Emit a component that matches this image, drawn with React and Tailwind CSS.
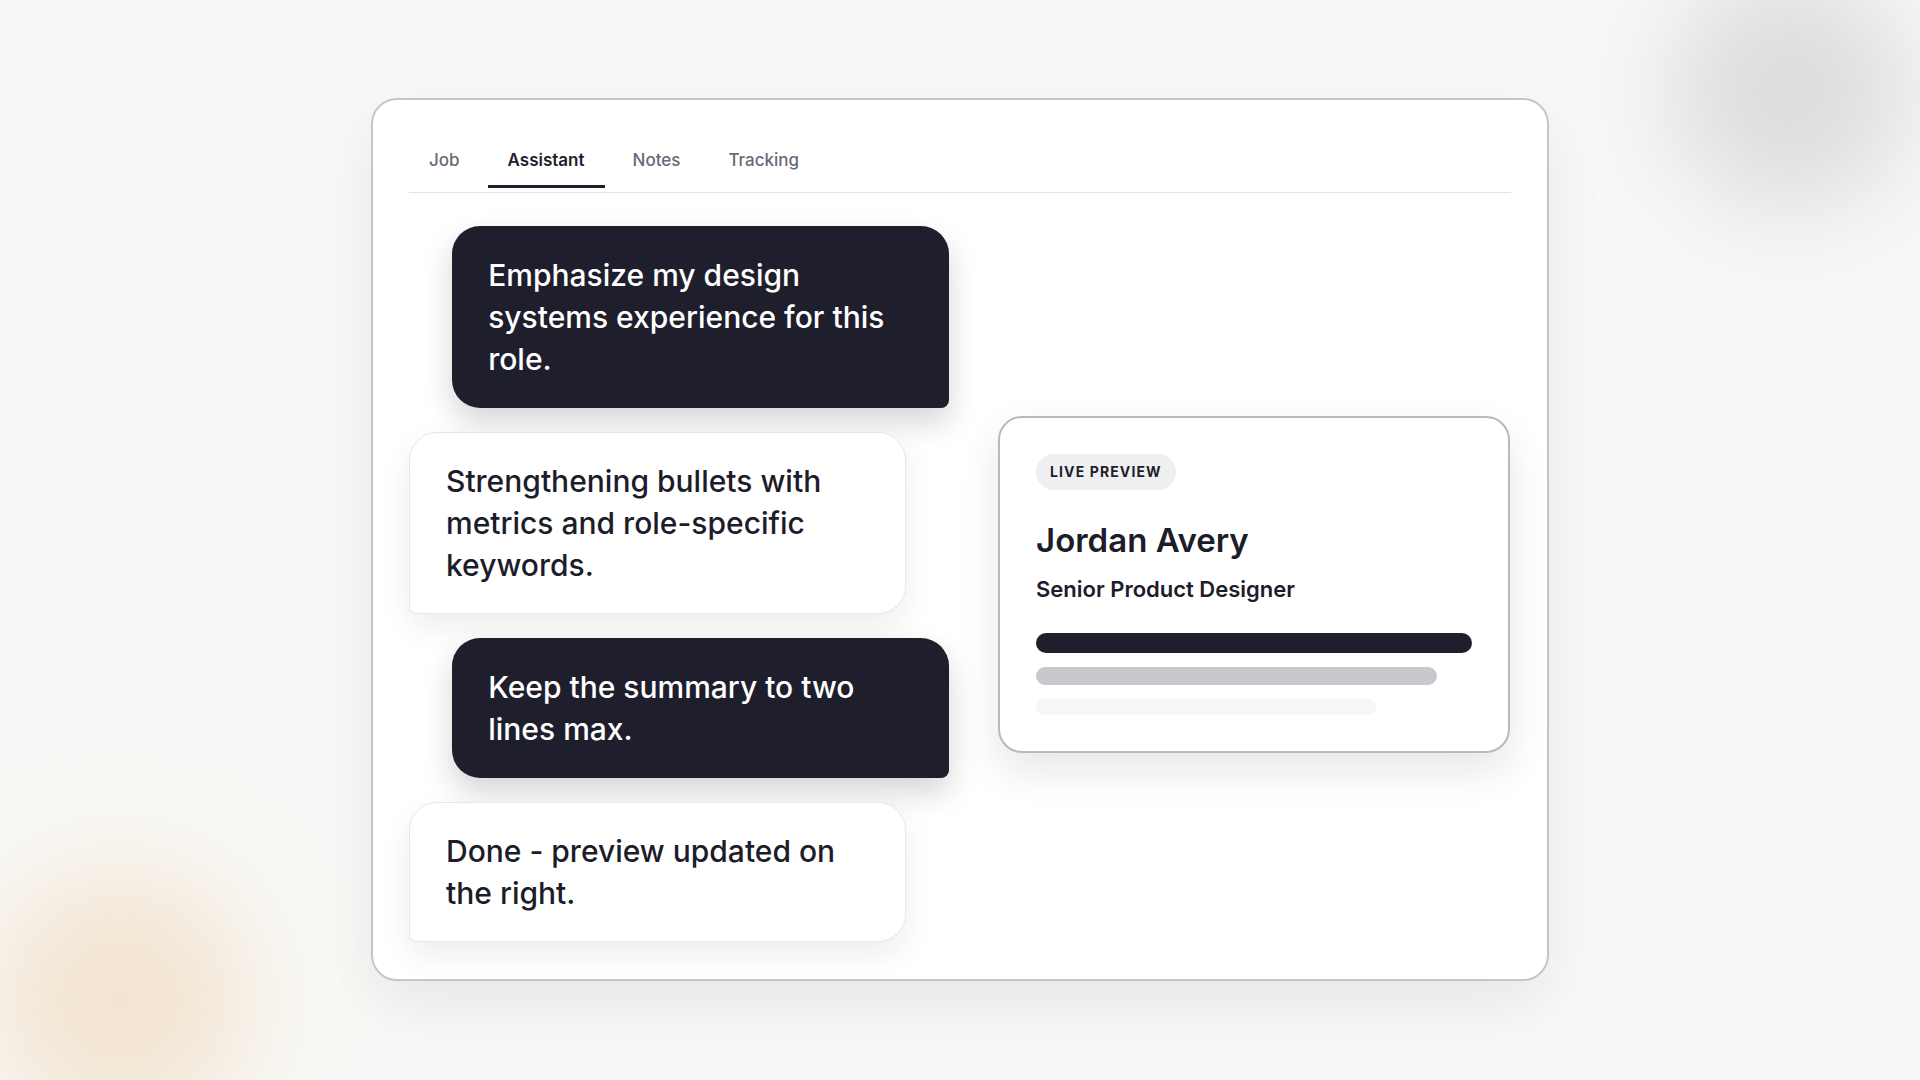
import React from 'react';

const tabs = ['Job', 'Assistant', 'Notes', 'Tracking'];

const messages = [
    { from: 'user', text: 'Emphasize my design systems experience for this role.' },
    { from: 'bot', text: 'Strengthening bullets with metrics and role-specific keywords.' },
    { from: 'user', text: 'Keep the summary to two lines max.' },
    { from: 'bot', text: 'Done - preview updated on the right.' },
];

function Bubble({ from, text }) {
    if (from === 'user') {
        return (
            <div className="self-end max-w-[92%] bg-[#1f1e2c] text-white rounded-[28px] rounded-br-[8px] px-9 py-7 text-[30px] leading-[42px] font-medium shadow-[0_14px_30px_rgba(20,20,40,0.18)]">
                {text}
            </div>
        );
    }
    return (
        <div className="self-start max-w-[92%] bg-white text-[#1c1c2a] border border-[#e6e7eb] rounded-[28px] rounded-bl-[8px] px-9 py-[27px] text-[30px] leading-[42px] font-medium shadow-[0_12px_30px_rgba(20,20,40,0.08)]">
            {text}
        </div>
    );
}

function LivePreview() {
    return (
        <div className="w-[512px] bg-white border-2 border-[#b9b9bc] rounded-3xl p-9 shadow-[0_18px_40px_rgba(20,20,40,0.10)]">
            <span className="inline-block bg-[#efeff1] text-[#1f1e2c] rounded-full px-[14px] py-2 text-[14px] leading-5 font-bold tracking-[0.08em]">
                LIVE PREVIEW
            </span>
            <h2 className="mt-[30px] text-[33px] leading-10 font-semibold text-[#1c1c2a]">Jordan Avery</h2>
            <p className="mt-[15px] text-[22px] leading-7 font-semibold text-[#1c1c2a]">Senior Product Designer</p>
            <div className="mt-[30px] flex flex-col gap-[14px]">
                <div className="h-5 w-full rounded-full bg-[#1f1e2c]" />
                <div className="h-[18px] w-[92%] rounded-full bg-[#c9c9cd]" />
                <div className="h-4 w-[78%] rounded-full bg-[#f5f6f8]" />
            </div>
        </div>
    );
}

export default function App() {
    return (
        <div className="relative h-[1080px] overflow-hidden bg-[#f8f8f6] font-['Inter',_'Noto_Sans',_sans-serif] pt-[98px]">
            {/* soft background blobs */}
            <div className="absolute left-[1670px] top-[-30px] w-[240px] h-[240px] rounded-full bg-[#d2d2d2] opacity-75 blur-[55px]" />
            <div className="absolute left-[-10px] top-[870px] w-[260px] h-[260px] rounded-full bg-[#f1dcc2] opacity-70 blur-[55px]" />

            <div className="relative mx-auto w-[1178px] h-[883px] bg-white border-2 border-[#c6c6c8] rounded-[26px] px-9 pt-[34px] shadow-[0_24px_60px_rgba(0,0,0,0.07)]">
                <nav className="flex gap-2 border-b border-[#e4e4e7] pb-1">
                    {tabs.map(t => (
                        <button
                            key={t}
                            className={
                                t === 'Assistant'
                                    ? 'px-5 pt-[14px] pb-[13px] text-[17px] leading-6 font-semibold text-[#1f1e2c] border-b-[3px] border-[#1f1e2c]'
                                    : 'px-5 pt-[14px] pb-[13px] text-[17px] leading-6 font-medium text-[#666a76] border-b-[3px] border-transparent'
                            }
                        >
                            {t}
                        </button>
                    ))}
                </nav>

                <div className="mt-[33px] flex items-center gap-[49px]">
                    <div className="w-[540px] flex flex-col gap-6">
                        {messages.map((m, i) => (
                            <Bubble key={i} {...m} />
                        ))}
                    </div>
                    <LivePreview />
                </div>
            </div>
        </div>
    );
}
